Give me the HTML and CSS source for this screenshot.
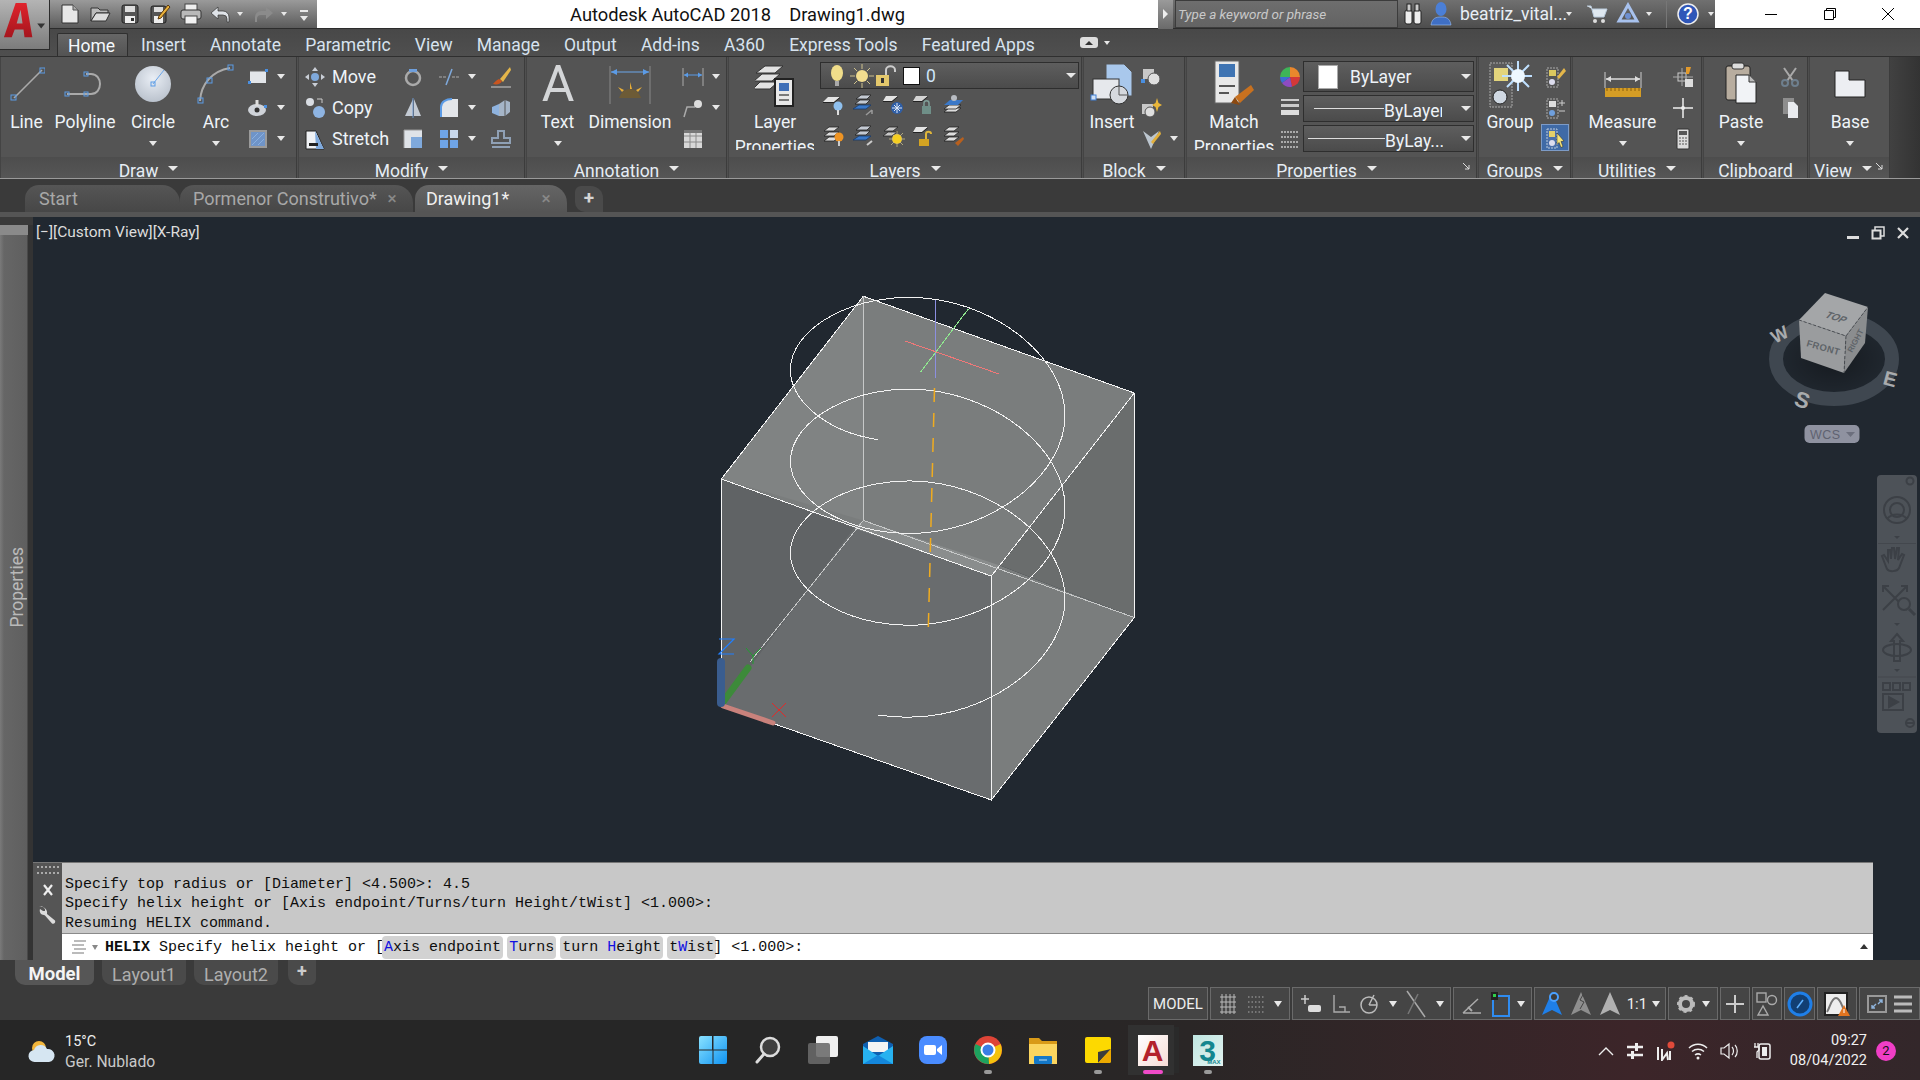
FILE: index.html
```html
<!DOCTYPE html>
<html lang="pt">
<head>
<meta charset="utf-8">
<title>Autodesk AutoCAD 2018 - Drawing1.dwg</title>
<link rel="stylesheet" href="styles.css">
</head>
<body>
<div class="app">

<header class="titlebar">
  <div class="qat">
    <svg class="q" width="22" height="22" viewBox="0 0 22 22"><path d="M3 2h11l5 5v13H3z" fill="#e8e8e8" stroke="#333"/><path d="M14 2v5h5" fill="#aaa" stroke="#555"/></svg>
    <svg class="q" width="22" height="22" viewBox="0 0 22 22"><path d="M2 5h7l2 2h8v3H7L2 18z" fill="#bbb" stroke="#333"/><path d="M7 10h14l-4 8H2z" fill="#ddd" stroke="#333"/></svg>
    <svg class="q" width="22" height="22" viewBox="0 0 22 22"><rect x="3" y="2" width="16" height="18" rx="2" fill="#555" stroke="#222"/><rect x="6" y="3" width="10" height="6" fill="#ddd"/><rect x="6" y="13" width="10" height="7" fill="#eee"/><rect x="12" y="15" width="3" height="3" fill="#333"/></svg>
    <svg class="q" width="22" height="22" viewBox="0 0 22 22"><rect x="2" y="3" width="15" height="17" rx="2" fill="#555" stroke="#222"/><rect x="5" y="4" width="9" height="5" fill="#ddd"/><rect x="5" y="13" width="9" height="7" fill="#eee"/><path d="M19 2L10 13l-1 3 3-1 9-11z" fill="#e8b03a" stroke="#5b3a10"/></svg>
    <svg class="q" width="24" height="22" viewBox="0 0 24 22"><rect x="6" y="1" width="12" height="7" fill="#eee" stroke="#444"/><rect x="2" y="7" width="20" height="9" rx="2" fill="#b9b9b9" stroke="#333"/><rect x="6" y="13" width="12" height="8" fill="#f2f2f2" stroke="#444"/></svg>
    <svg class="q q-undo" width="22" height="22" viewBox="0 0 22 22"><path d="M9 4L2 10l7 6v-4h5a4 4 0 0 1 4 4v3h2v-5a6 6 0 0 0-6-6H9z" fill="#dfe3e8" stroke="#333" stroke-width=".7"/></svg>
    <i class="ar ar-q"></i>
    <svg class="q q-redo" width="22" height="22" viewBox="0 0 22 22"><path d="M13 4l7 6-7 6v-4H8a4 4 0 0 0-4 4v3H2v-5a6 6 0 0 1 6-6h5z" fill="#8b8b8b"/></svg>
    <i class="ar ar-q ar-q2"></i>
    <span class="q-more"><i class="ar"></i></span>
  </div>
  <div class="apptitle">Autodesk AutoCAD 2018&nbsp;&nbsp;&nbsp;&nbsp;Drawing1.dwg</div>
  <div class="infocenter">
    <span class="ic-arrow"></span>
    <span class="search">Type a keyword or phrase</span>
    <svg class="bino" width="20" height="24" viewBox="0 0 20 24"><rect x="2" y="8" width="7" height="14" rx="2" fill="#eee" stroke="#222"/><rect x="11" y="8" width="7" height="14" rx="2" fill="#eee" stroke="#222"/><rect x="4" y="2" width="4" height="7" fill="#ccc" stroke="#222"/><rect x="12" y="2" width="4" height="7" fill="#ccc" stroke="#222"/></svg>
    <svg class="user" width="22" height="26" viewBox="0 0 22 26"><ellipse cx="11" cy="8" rx="5.5" ry="7" fill="#4b7fd6"/><path d="M1 24c1-7 5-8 10-8s9 1 10 8z" fill="#3f6fc4" stroke="#9cc0f5" stroke-width=".6"/></svg>
    <span class="uname">beatriz_vital...</span><i class="ar ar-sm"></i>
    <svg class="cart" width="22" height="22" viewBox="0 0 22 22"><path d="M1 3h4l3 11h10l3-8H6" fill="#dfe8f0" stroke="#bcd"/><circle cx="9" cy="18" r="2" fill="#ddd"/><circle cx="17" cy="18" r="2" fill="#ddd"/></svg>
    <svg class="tri" width="24" height="24" viewBox="0 0 24 24"><path d="M12 3L3 19h18z" fill="none" stroke="#a8c2ee" stroke-width="3"/><circle cx="12" cy="14" r="3" fill="#6d8fd0"/></svg><i class="ar ar-sm"></i>
    <span class="ic-sep"></span>
    <svg class="help" width="22" height="22" viewBox="0 0 22 22"><circle cx="11" cy="11" r="10" fill="#2f56b8" stroke="#eee" stroke-width="1.5"/><text x="11" y="16" text-anchor="middle" class="help-q">?</text></svg><i class="ar ar-sm"></i>
  </div>
  <div class="winbtns">
    <svg width="14" height="14" viewBox="0 0 14 14"><path d="M1 7.500h12" stroke="#000"/></svg>
    <svg width="14" height="14" viewBox="0 0 14 14"><path d="M3.500 3.500V1.500h9v9h-2M1.500 3.500h9v9h-9z" fill="none" stroke="#000"/></svg>
    <svg width="14" height="14" viewBox="0 0 14 14"><path d="M1 1l12 12M13 1L1 13" stroke="#000"/></svg>
  </div>
</header>

<svg class="applogo" width="50" height="50" viewBox="0 0 50 50">
  <defs><linearGradient id="red" x1="0" y1="0" x2="0" y2="1"><stop offset="0" stop-color="#e0242c"/><stop offset="1" stop-color="#a5161e"/></linearGradient></defs>
  <path d="M4 38L16 3h11l6 35h-8l-1-8H15l-3 8zM17 24h6l-2-14z" fill="url(#red)"/>
  <path d="M38 24h8l-4 5z" fill="#333"/>
</svg>

<nav class="ribbontabs">
  <span class="rt rt-on">Home</span><span class="rt">Insert</span><span class="rt">Annotate</span><span class="rt">Parametric</span><span class="rt">View</span><span class="rt">Manage</span><span class="rt">Output</span><span class="rt">Add-ins</span><span class="rt">A360</span><span class="rt">Express Tools</span><span class="rt">Featured Apps</span>
  <svg class="rt-min" width="18" height="12" viewBox="0 0 18 12"><rect width="18" height="11" rx="3" fill="#ddd"/><path d="M5 8l4-4 4 4z" fill="#333"/></svg><i class="ar ar-sm"></i>
</nav>

<section class="ribbon">

  <div class="panel p-draw">
    <div class="pbody">
      <div class="big b-line"><div class="bi"><svg width="36" height="36" viewBox="0 0 36 36"><path d="M5 32L33 4" stroke="#aaa" stroke-width="1.600"/><rect x="2" y="29" width="5" height="5" fill="none" stroke="#5b9be6"/><rect x="31" y="2" width="5" height="5" fill="none" stroke="#5b9be6"/></svg></div><span>Line</span></div>
      <div class="big b-poly"><div class="bi"><svg width="42" height="32" viewBox="0 0 42 32"><path d="M3 26h24c12 0 12-20 0-20h-5" fill="none" stroke="#aaa" stroke-width="2"/><g fill="none" stroke="#5b9be6"><rect x="1" y="24" width="4" height="4"/><rect x="20" y="24" width="4" height="4"/><rect x="20" y="4" width="4" height="4"/></g></svg></div><span>Polyline</span></div>
      <div class="big b-circle"><div class="bi"><svg width="40" height="40" viewBox="0 0 40 40"><defs><radialGradient id="disc" cx=".5" cy=".35" r=".7"><stop offset="0" stop-color="#e9eef5"/><stop offset="1" stop-color="#b7bfca"/></radialGradient></defs><circle cx="20" cy="20" r="18" fill="url(#disc)"/><path d="M20 20L31 6" stroke="#6aa6ea"/><rect x="18" y="18" width="4" height="4" fill="none" stroke="#5b9be6"/></svg></div><span>Circle</span><i class="ar ar-big"></i></div>
      <div class="big b-arc"><div class="bi"><svg width="40" height="40" viewBox="0 0 40 40"><path d="M4 37C5 20 16 7 34 4" fill="none" stroke="#aaa" stroke-width="2"/><g fill="none" stroke="#5b9be6"><rect x="2" y="34" width="5" height="5"/><rect x="11" y="14" width="5" height="5"/><rect x="32" y="1" width="5" height="5"/></g></svg></div><span>Arc</span><i class="ar ar-big"></i></div>
      <div class="smallcol">
        <div class="sm"><svg width="22" height="22" viewBox="0 0 22 22"><rect x="3" y="5" width="16" height="12" fill="#e3e6ea"/><path d="M3 5h16" stroke="#666"/><g fill="#4a8fe0"><rect x="1" y="15" width="3" height="3"/><rect x="18" y="3" width="3" height="3"/></g></svg><i class="ar"></i></div>
        <div class="sm"><svg width="22" height="22" viewBox="0 0 22 22"><ellipse cx="10" cy="13" rx="9" ry="6" fill="#cfd3d9"/><circle cx="10" cy="13" r="2.500" fill="#333"/><path d="M10 3v6" stroke="#ddd" stroke-width="3"/><rect x="17" y="8" width="3" height="3" fill="#4a8fe0"/></svg><i class="ar"></i></div>
        <div class="sm"><svg width="22" height="22" viewBox="0 0 22 22"><rect x="3" y="3" width="16" height="16" fill="#6f94c8" stroke="#9a9a9a" stroke-width="2"/><path d="M5 17L17 5M5 11l6-6M11 17l6-6" stroke="#8ab0e0"/></svg><i class="ar"></i></div>
      </div>
    </div>
    <div class="ptitle">Draw<i class="ar ar-t"></i></div>
  </div>

  <div class="panel p-modify">
    <div class="pbody">
      <div class="smallcol col-labels">
        <div class="sm"><svg width="22" height="22" viewBox="0 0 22 22"><path d="M11 1l3 4h-6zM11 21l3-4h-6zM1 11l4-3v6zM21 11l-4-3v6z" fill="#c9ced6"/><circle cx="11" cy="11" r="4" fill="#7fa9dc"/></svg><span>Move</span></div>
        <div class="sm"><svg width="22" height="22" viewBox="0 0 22 22"><circle cx="6" cy="5" r="4" fill="#d9dde3"/><circle cx="15" cy="15" r="6" fill="#8eb4e2"/><path d="M13 2h5v4" fill="none" stroke="#ccc"/></svg><span>Copy</span></div>
        <div class="sm"><svg width="22" height="22" viewBox="0 0 22 22"><path d="M2 3h10l8 18H2z" fill="#f0f2f5" stroke="#222"/><path d="M11 3l9 18h-8z" fill="#7fa9dc"/><path d="M5 15h9v3H5z" fill="#222"/></svg><span>Stretch</span></div>
      </div>
      <div class="smallcol">
        <div class="sm"><svg width="22" height="22" viewBox="0 0 22 22"><circle cx="11" cy="12" r="7" fill="none" stroke="#aaa" stroke-width="2.500"/><path d="M7 3h8v3H7z" fill="#6f9fdc"/></svg></div>
        <div class="sm"><svg width="22" height="22" viewBox="0 0 22 22"><path d="M11 2L3 19h8zM12 2l7 17h-7z" fill="#c3cad3"/><path d="M11 1v20" stroke="#6d96cc"/></svg></div>
        <div class="sm"><svg width="22" height="22" viewBox="0 0 22 22"><rect x="2" y="2" width="18" height="18" fill="#dfe3e8"/><rect x="9" y="9" width="11" height="11" fill="#7fa9dc"/><path d="M2 2h18M2 2v18" stroke="#999"/></svg></div>
      </div>
      <div class="smallcol">
        <div class="sm"><svg width="22" height="22" viewBox="0 0 22 22"><path d="M1 11h7M14 11h7" stroke="#aaa" stroke-dasharray="3 1"/><path d="M14 3L8 19" stroke="#7fa9dc" stroke-width="1.500"/></svg><i class="ar"></i></div>
        <div class="sm"><svg width="22" height="22" viewBox="0 0 22 22"><path d="M3 20V10C3 5 8 2 14 2h6v18z" fill="#e3e6ea"/><path d="M3 20V10C3 5 8 2 14 2" fill="none" stroke="#5b9be6" stroke-width="2"/></svg><i class="ar"></i></div>
        <div class="sm"><svg width="22" height="22" viewBox="0 0 22 22"><g fill="#6fa4e6"><rect x="2" y="2" width="8" height="8"/><rect x="2" y="12" width="8" height="8"/><rect x="12" y="12" width="8" height="8"/></g><rect x="12" y="2" width="8" height="8" fill="#c8d8ec"/></svg><i class="ar"></i></div>
      </div>
      <div class="smallcol">
        <div class="sm"><svg width="22" height="22" viewBox="0 0 22 22"><path d="M20 1L10 13l3 3L21 4z" fill="#e4b64a"/><path d="M9 13c-3 1-4 3-6 5 4 1 8 0 9-3z" fill="#c9551f"/><path d="M1 21h20" stroke="#ccc"/></svg></div>
        <div class="sm"><svg width="22" height="22" viewBox="0 0 22 22"><path d="M2 10l7-3v12l-7-3z" fill="#8fb3df"/><path d="M9 7l6-4 5 2v10l-5 4-6 0z" fill="#a5b5c8"/><path d="M15 3v16" stroke="#555"/></svg></div>
        <div class="sm"><svg width="22" height="22" viewBox="0 0 22 22"><path d="M8 10V3h6v7h6v5H2v-5zM2 19h18" fill="none" stroke="#8fa0b5" stroke-width="2"/></svg></div>
      </div>
    </div>
    <div class="ptitle">Modify<i class="ar ar-t"></i></div>
  </div>

  <div class="panel p-annot">
    <div class="pbody">
      <div class="big b-text"><div class="bi"><svg width="36" height="52" viewBox="0 0 36 52"><text x="18" y="43" text-anchor="middle" class="big-a">A</text></svg></div><span>Text</span><i class="ar ar-big"></i></div>
      <div class="big b-dim"><div class="bi"><svg width="46" height="44" viewBox="0 0 46 44"><path d="M3 4v38M43 4v38" stroke="#888"/><path d="M4 10h38" stroke="#6aa6ea"/><path d="M4 10l6-3v6zM42 10l-6-3v6z" fill="#5b9be6"/><path d="M12 36c4-12 18-12 22 0z" fill="#6d5b36"/><g fill="#e9ae37"><path d="M15 30l-4-5 6 3zM23 27v-7l2 7zM31 30l4-5-6 3z"/></g></svg></div><span>Dimension</span></div>
      <div class="smallcol">
        <div class="sm"><svg width="22" height="22" viewBox="0 0 22 22"><path d="M1 2v18M21 2v18" stroke="#aaa"/><path d="M2 9h18" stroke="#5b9be6"/><path d="M2 9l4-2.500v5zM20 9l-4-2.500v5z" fill="#5b9be6"/></svg><i class="ar"></i></div>
        <div class="sm"><svg width="22" height="22" viewBox="0 0 22 22"><path d="M2 20l3-10h8" fill="none" stroke="#aaa" stroke-width="1.500"/><circle cx="16" cy="7" r="4" fill="#ddd"/></svg><i class="ar"></i></div>
        <div class="sm"><svg width="22" height="22" viewBox="0 0 22 22"><rect x="2" y="2" width="18" height="18" fill="#d8d8d8"/><path d="M2 8h18M2 14h18M8 2v18M14 2v18" stroke="#8a8a8a"/><rect x="2" y="2" width="18" height="3" fill="#777"/></svg></div>
      </div>
    </div>
    <div class="ptitle">Annotation<i class="ar ar-t"></i></div>
  </div>

  <div class="panel p-layers">
    <div class="pbody">
      <div class="big b-layer"><div class="bi"><svg width="40" height="50" viewBox="0 0 40 50"><g fill="#e2e2e2" stroke="#333"><path d="M10 7h18l-8 7H1z"/><path d="M7 15h18l-8 7H-1z"/><path d="M5 23h18l-8 7H-2z"/></g><rect x="20" y="20" width="18" height="27" fill="#e9e9e9" stroke="#222" stroke-width="2"/><rect x="24" y="24" width="10" height="8" fill="#3f6fb8"/><path d="M24 36h10M24 41h10" stroke="#555" stroke-width="1.500"/></svg></div><span>Layer</span><span>Properties</span></div>
      <div class="layercol">
        <div class="dd dd-layer">
          <svg width="24" height="24" viewBox="0 0 24 24"><ellipse cx="12" cy="9" rx="6" ry="8" fill="#f0dd8a"/><rect x="10" y="17" width="4" height="5" fill="#aaa"/></svg>
          <svg width="26" height="26" viewBox="0 0 26 26"><circle cx="13" cy="13" r="6" fill="#f2dd8f"/><path d="M13 1v5M13 20v5M1 13h5M20 13h5M5 5l3 3M18 18l3 3M21 5l-3 3M8 18l-3 3" stroke="#cfc28d"/></svg>
          <svg width="24" height="24" viewBox="0 0 24 24"><rect x="1" y="11" width="13" height="11" fill="#e4c86c"/><rect x="6" y="14" width="3" height="5" fill="#333"/><path d="M11 11V6c0-5 9-5 9 0v2" fill="none" stroke="#ccc" stroke-width="2"/></svg>
          <span class="swatch"></span><span class="dd-text dd-zero">0</span><i class="ar ar-dd"></i>
        </div>
        <div class="lrow">
          <svg width="22" height="22" viewBox="0 0 22 22"><path d="M5 3h12l-6 5H0z" fill="#e4e4e4"/><path d="M0 8h11l6-5v1l-6 5H0z" fill="#222"/><circle cx="15" cy="12" r="4.500" fill="#8fc0ee"/><rect x="14" y="16" width="2" height="5" fill="#ddd"/></svg>
          <svg width="22" height="22" viewBox="0 0 22 22"><g fill="#c3c9d2" stroke="#222" stroke-width=".8"><path d="M8 1h10l-4 4H3z"/><path d="M7 6h10l-4 4H2z"/></g><path d="M6 11h12l-5 4H0z" fill="#3a78c8" stroke="#183a6a" stroke-width=".8"/><path d="M13 21l6-5M19 16v4" stroke="#9a9a9a" stroke-width="1.500" fill="none"/></svg>
          <svg width="22" height="22" viewBox="0 0 22 22"><path d="M3 2h12l-6 5H0z" fill="#e4e4e4"/><path d="M0 7h9l6-5v1l-6 5H0z" fill="#222"/><circle cx="14" cy="14" r="6" fill="#2f5fa8"/><path d="M14 9v10M9 14h10M11 11l6 6M17 11l-6 6" stroke="#dfe8f5"/></svg>
          <svg width="22" height="22" viewBox="0 0 22 22"><path d="M3 2h12l-6 5H0z" fill="#d4d4d4"/><path d="M0 7h9l6-5v1l-6 5H0z" fill="#222"/><rect x="9" y="12" width="9" height="8" fill="#6f8f88"/><path d="M11 12V9c0-3 5-3 5 0v3" fill="none" stroke="#7f9f98" stroke-width="1.500"/></svg>
          <svg width="22" height="22" viewBox="0 0 22 22"><g fill="#ddd" stroke="#222" stroke-width=".8"><path d="M6 14h12l-5 4H1z"/><path d="M6 11h12l-5 4H1z"/></g><path d="M7 6h13l-5 5H1z" fill="#3a78c8"/><circle cx="11" cy="4" r="3" fill="#b8bcc2"/></svg>
        </div>
        <div class="lrow">
          <svg width="22" height="22" viewBox="0 0 22 22"><g fill="#ddd" stroke="#222" stroke-width=".8"><path d="M6 2h10l-5 4H1z"/><path d="M6 7h10l-5 4H1z"/><path d="M6 12h10l-5 4H1z"/></g><circle cx="16" cy="12" r="4.500" fill="#ee9424"/><rect x="15" y="16" width="2" height="5" fill="#ccc"/></svg>
          <svg width="22" height="22" viewBox="0 0 22 22"><g fill="#c3c9d2" stroke="#222" stroke-width=".8"><path d="M8 1h10l-4 4H3z"/><path d="M7 6h10l-4 4H2z"/></g><path d="M6 11h12l-5 4H0z" fill="#3a78c8" stroke="#183a6a" stroke-width=".8"/><path d="M14 20l5-4" stroke="#ccc" stroke-width="2"/></svg>
          <svg width="22" height="22" viewBox="0 0 22 22"><g fill="#c8c8c8" stroke="#222" stroke-width=".8"><path d="M6 2h9l-5 4H1z"/><path d="M5 7h9l-5 4H0z"/></g><circle cx="14" cy="14" r="5" fill="#f0c93c"/><path d="M14 6v16M6 14h16M8 8l12 12M20 8L8 20" stroke="#c8bd8a" stroke-width=".8"/><circle cx="14" cy="14" r="4" fill="#f5cf20"/></svg>
          <svg width="22" height="22" viewBox="0 0 22 22"><path d="M3 2h12l-6 5H0z" fill="#e4e4e4"/><path d="M0 7h9l6-5v1l-6 5H0z" fill="#222"/><rect x="6" y="14" width="10" height="7" fill="#d3a322"/><path d="M13 14V9c0-3 5-3 5 0" fill="none" stroke="#e0b63a" stroke-width="2"/></svg>
          <svg width="22" height="22" viewBox="0 0 22 22"><g fill="#ddd" stroke="#222" stroke-width=".8"><path d="M6 2h10l-5 4H1z"/><path d="M6 7h10l-5 4H1z"/><path d="M6 12h10l-5 4H1z"/></g><path d="M20 12l-8 6 3 3 6-7z" fill="#b8601e"/></svg>
        </div>
      </div>
    </div>
    <div class="ptitle">Layers<i class="ar ar-t"></i></div>
  </div>

  <div class="panel p-block">
    <div class="pbody">
      <div class="big b-insert"><div class="bi"><svg width="44" height="44" viewBox="0 0 44 44"><path d="M16 2h18l8 8v24H16z" fill="#a9c8ec" stroke="#555"/><rect x="3" y="17" width="26" height="20" fill="#e6e8ec" stroke="#333"/><circle cx="29" cy="33" r="9" fill="#d6d9de" stroke="#333"/><path d="M29 24v9h9" fill="none" stroke="#555"/><rect x="1" y="33" width="5" height="5" fill="#cfe0f5" stroke="#3f7fd6"/></svg></div><span>Insert</span></div>
      <div class="smallcol">
        <div class="sm"><svg width="22" height="22" viewBox="0 0 22 22"><rect x="3" y="3" width="11" height="10" fill="#c8c8c8"/><circle cx="14" cy="13" r="6" fill="#dfdfdf" stroke="#555"/><rect x="1" y="13" width="4" height="4" fill="#4a8fe0"/></svg></div>
        <div class="sm"><svg width="22" height="22" viewBox="0 0 22 22"><rect x="2" y="7" width="11" height="10" fill="#c8c8c8"/><circle cx="10" cy="15" r="5" fill="#dfdfdf" stroke="#555"/><path d="M17 1l1.500 5L22 8l-3.500 2L17 15l-1.500-5L12 8l3.500-2z" fill="#e9b63a"/></svg></div>
        <div class="sm"><svg width="22" height="22" viewBox="0 0 22 22"><path d="M3 3l8 18 8-18-8 6z" fill="#bcc6cf"/><path d="M20 3l-9 11 2 2 8-10z" fill="#e2b03c"/></svg><i class="ar"></i></div>
      </div>
    </div>
    <div class="ptitle">Block<i class="ar ar-t"></i></div>
  </div>

  <div class="panel p-props">
    <div class="pbody">
      <div class="big b-match"><div class="bi"><svg width="46" height="50" viewBox="0 0 46 50"><rect x="4" y="2" width="24" height="42" fill="#e8e8e8" stroke="#666"/><rect x="8" y="5" width="16" height="13" fill="#3f74b3"/><path d="M8 27h16M8 34h10" stroke="#555" stroke-width="2"/><path d="M40 26L24 38l5 6 14-13z" fill="#c8711f"/><path d="M24 38l-4 6 9 2z" fill="#8b4a12"/></svg></div><span>Match</span><span>Properties</span></div>
      <div class="propicons">
        <svg width="22" height="22" viewBox="0 0 22 22"><path d="M11 11V1a10 10 0 0 1 10 10z" fill="#e9872c"/><path d="M11 11h10a10 10 0 0 1-8 9.800z" fill="#d43838"/><path d="M11 11l2 9.800A10 10 0 0 1 3 17z" fill="#8e4bc1"/><path d="M11 11L3 17A10 10 0 0 1 1 11z" fill="#3c6ed2"/><path d="M11 11H1A10 10 0 0 1 11 1z" fill="#3eb457"/></svg>
        <svg width="22" height="22" viewBox="0 0 22 22"><rect x="2" y="2" width="18" height="2" fill="#ccc"/><rect x="2" y="7" width="18" height="3" fill="#ccc"/><rect x="2" y="13" width="18" height="5" fill="#ddd"/></svg>
        <svg width="22" height="22" viewBox="0 0 22 22"><path d="M2 4h18M2 9h18M2 14h18M2 19h18" stroke="#aaa" stroke-width="2" stroke-dasharray="2 1"/></svg>
      </div>
      <div class="propdds">
        <div class="dd dd-c"><span class="swatch swatch-l"></span><span class="dd-text">ByLayer</span><i class="ar ar-dd"></i></div>
        <div class="dd dd-l"><span class="lnline"></span><span class="dd-text dd-clip">ByLayer</span><i class="ar ar-dd"></i></div>
        <div class="dd dd-l"><span class="lnline lnline-w"></span><span class="dd-text dd-clip">ByLay...</span><i class="ar ar-dd"></i></div>
      </div>
    </div>
    <div class="ptitle">Properties<i class="ar ar-t"></i><svg class="launcher" width="9" height="9" viewBox="0 0 9 9"><path d="M1 1l6 6M7 3v4H3" fill="none" stroke="#ddd"/></svg></div>
  </div>

  <div class="panel p-groups">
    <div class="pbody">
      <div class="big b-group"><div class="bi"><svg width="44" height="50" viewBox="0 0 44 50"><rect x="2" y="4" width="22" height="44" fill="#5b5b5b" stroke="#aaa" stroke-dasharray="2 1"/><rect x="6" y="9" width="14" height="13" fill="#e3d47c"/><circle cx="12" cy="38" r="7" fill="#cfd8e2" stroke="#222"/><g stroke="#bfe0ff" stroke-width="2"><path d="M30 2v30M14 17h30M19 6l22 22M41 6L19 28"/></g><circle cx="30" cy="17" r="7" fill="#eef8ff"/></svg></div><span>Group</span></div>
      <div class="smallcol col-group">
        <div class="sm"><svg width="22" height="22" viewBox="0 0 22 22"><rect x="3" y="2" width="11" height="19" fill="#555" stroke="#aaa" stroke-dasharray="2 1"/><rect x="5" y="4" width="7" height="6" fill="#dcc85f"/><circle cx="8" cy="16" r="3" fill="#dde"/><path d="M20 2l-7 9 2 2 7-8z" fill="#e4b64a"/></svg></div>
        <div class="sm"><svg width="22" height="22" viewBox="0 0 22 22"><rect x="3" y="2" width="11" height="19" fill="#555" stroke="#aaa" stroke-dasharray="2 1"/><rect x="5" y="4" width="7" height="6" fill="#ddd"/><circle cx="8" cy="16" r="3" fill="#6f9fdc"/><path d="M18 3v6M15 6h6M15 14h6" stroke="#ccc"/></svg></div>
        <div class="sm sm-active"><svg width="22" height="22" viewBox="0 0 22 22"><rect x="3" y="2" width="10" height="19" fill="#4a6fa8" stroke="#bcd" stroke-dasharray="2 1"/><rect x="5" y="4" width="6" height="6" fill="#e2cf6a"/><circle cx="8" cy="16" r="3" fill="#dde"/><path d="M13 6l7 8-3 .500 2 5-2 1-2-5-2 2z" fill="#f4e27a" stroke="#222" stroke-width=".5"/></svg></div>
      </div>
    </div>
    <div class="ptitle">Groups<i class="ar ar-t"></i></div>
  </div>

  <div class="panel p-util">
    <div class="pbody">
      <div class="big b-measure"><div class="bi"><svg width="40" height="36" viewBox="0 0 40 36"><path d="M2 6v16M38 6v16" stroke="#ccc"/><path d="M3 13h34" stroke="#ddd" stroke-width="1.500"/><path d="M3 13l5-3v6zM37 13l-5-3v6z" fill="#ddd"/><rect x="2" y="22" width="36" height="9" fill="#d59d25"/><path d="M4 22v3M8 22v3M12 22v3M16 22v3M20 22v3M24 22v3M28 22v3M32 22v3M36 22v3" stroke="#8a5e0c"/></svg></div><span>Measure</span><i class="ar ar-big"></i></div>
      <div class="smallcol">
        <div class="sm"><svg width="22" height="22" viewBox="0 0 22 22"><rect x="6" y="7" width="8" height="8" fill="none" stroke="#ccc"/><path d="M1 11h20M10 2v18" stroke="#aaa"/><path d="M14 1h5l-2 7h-3z" fill="#e29a2c"/><rect x="13" y="13" width="8" height="8" fill="#ddd"/></svg></div>
        <div class="sm"><svg width="22" height="22" viewBox="0 0 22 22"><path d="M11 1v20M1 11h20" stroke="#c8c8c8" stroke-width="2"/><circle cx="11" cy="11" r="2" fill="#eee"/></svg></div>
        <div class="sm"><svg width="22" height="22" viewBox="0 0 22 22"><rect x="5" y="1" width="12" height="20" rx="1" fill="#dcdcdc" stroke="#333"/><rect x="7" y="3" width="8" height="4" fill="#555"/><path d="M7 10h8M7 13h8M7 16h8" stroke="#555" stroke-dasharray="2 1"/></svg></div>
      </div>
    </div>
    <div class="ptitle">Utilities<i class="ar ar-t"></i></div>
  </div>

  <div class="panel p-clip">
    <div class="pbody">
      <div class="big b-paste"><div class="bi"><svg width="34" height="46" viewBox="0 0 34 46"><rect x="2" y="5" width="24" height="34" rx="2" fill="#b8ad9f" stroke="#222"/><rect x="8" y="2" width="12" height="6" rx="2" fill="#ddd" stroke="#333"/><path d="M12 14h13l7 7v21H12z" fill="#f1f3f6" stroke="#222"/><path d="M25 14v7h7" fill="#bbb" stroke="#333"/></svg></div><span>Paste</span><i class="ar ar-big"></i></div>
      <div class="smallcol">
        <div class="sm"><svg width="22" height="22" viewBox="0 0 22 22"><path d="M5 2l9 13M17 2L8 15" stroke="#a9a9a9" stroke-width="2"/><circle cx="6" cy="17" r="3" fill="none" stroke="#6e7f8e" stroke-width="2"/><circle cx="16" cy="17" r="3" fill="none" stroke="#6e7f8e" stroke-width="2"/></svg></div>
        <div class="sm"><svg width="22" height="22" viewBox="0 0 22 22"><rect x="4" y="1" width="11" height="16" fill="#8e8e8e"/><path d="M9 5h6l4 4v12H9z" fill="#e9ebef"/></svg></div>
      </div>
    </div>
    <div class="ptitle">Clipboard</div>
  </div>

  <div class="panel p-view">
    <div class="pbody">
      <div class="big b-base"><div class="bi"><svg width="34" height="30" viewBox="0 0 34 30"><path d="M2 2h14v9h16v17H2z" fill="#eceef2" stroke="#222"/></svg></div><span>Base</span><i class="ar ar-big"></i></div>
    </div>
    <div class="ptitle">View<i class="ar ar-t"></i><svg class="launcher" width="9" height="9" viewBox="0 0 9 9"><path d="M1 1l6 6M7 3v4H3" fill="none" stroke="#ddd"/></svg></div>
  </div>
</section>

<div class="doctabs">
  <span class="dt dt-start">Start</span>
  <span class="dt dt-porm">Pormenor Construtivo*<b class="x">✕</b></span>
  <span class="dt dt-on">Drawing1*<b class="x">✕</b></span>
  <span class="dt-plus">+</span>
</div>
<div class="docstrip"></div>

<main class="workspace">
  <aside class="palette"><span class="palette-grip"></span><span class="palette-label">Properties</span></aside>
  <div class="viewport">
    <svg class="drawing" width="1887" height="743" viewBox="33 217 1887 743">
      <g stroke="none">
        <polygon points="863.300,296.200 1134.300,393 1000,565.600 991.300,576.100 721.300,479" fill="#7a7d7d"/>
        <polygon points="863.300,296.200 863.300,520.400 721.300,479" fill="#808383"/>
        <polygon points="721.300,479 991.300,576.100 991.300,800 721.300,705.300" fill="#696c6e"/>
        <polygon points="1000,565.600 1134.300,393 1134.300,617.500" fill="#6a6d6d"/>
        <polygon points="991.300,576.100 1000,565.600 1134.300,617.500 991.300,800" fill="#7a7d7d"/>
        <polygon points="854,528 863.300,520.400 1000,565.600 991.300,576.100" fill="#8a8d8d"/>
        <polygon points="721.300,479 854,528 721.300,705.300" fill="#606365"/>
      </g>
      <g class="crisp" fill="none" stroke="#f4f4f4">
        <path d="M863.300 296.200L1134.300 393 1134.300 617.500 991.300 800 721.300 705.300 721.300 479zM721.300 479L991.300 576.100 1134.300 393M991.300 576.100V800"/>
      </g>
      <path class="crisp" d="M863.300 296.200V520.400M863.300 520.400L1134.300 617.500M863.300 520.400L750 662" fill="none" stroke="#c6c8c8"/>
      <path class="helix crisp" d="M877.700 439.600C826.700 431.800 790.400 401.200 790.400 369.500C790.400 327.900 855.800 290.700 927.700 298.350C999.600 306 1065 358.500 1065 415.400C1065 472.300 999.600 524.800 927.700 532.450C855.800 540.100 790.400 502.900 790.400 461.300C790.400 419.700 855.800 382.500 927.700 390.150C999.600 397.800 1065 450.300 1065 507.200C1065 564.100 999.600 616.600 927.700 624.250C855.800 631.900 790.400 594.700 790.400 553.100C790.400 511.500 855.800 474.300 927.700 481.950C999.600 489.600 1065 542.100 1065 599C1065 655.900 999.600 708.400 927.700 716.050C910.600 717.850 893.600 717.400 877.700 715"/>
      <path class="crisp" d="M935.500 300V378" stroke="#8c8fe0"/>
      <path class="crisp" d="M920.700 372L968.300 309" stroke="#8fe88f"/>
      <path class="crisp" d="M905 341L999 374" stroke="#f07878"/>
      <path d="M934.500 388L928.300 628" stroke="#f0ac20" stroke-width="1.500" stroke-dasharray="14 11" fill="none"/>
      <path d="M719 639h15l-15 15h15" fill="none" stroke="#1f7fff" stroke-width="1.200"/>
      <path d="M746 648l7 8 8-8M753 656v8" fill="none" stroke="#1f9f30"/>
      <path d="M772 703l14 14M786 703l-14 14" stroke="#e02a2a"/>
      <path d="M723 702L748 668" stroke="#3d8a3a" stroke-width="7" stroke-linecap="round"/>
      <path d="M723 706L773 723" stroke="#c9827c" stroke-width="5" stroke-linecap="round"/>
      <path d="M721 662V703" stroke="#3a5d8f" stroke-width="8" stroke-linecap="round"/>
    </svg>

    <div class="vp-label">[−][Custom View][X-Ray]</div>
    <div class="vp-controls">
      <svg width="14" height="14" viewBox="0 0 14 14"><rect x="1" y="10" width="12" height="3" fill="#ddd"/></svg>
      <svg width="14" height="14" viewBox="0 0 14 14"><path d="M4 4V1h9v9h-3" fill="none" stroke="#ddd" stroke-width="1.500"/><rect x="1.500" y="4.500" width="8" height="8" fill="none" stroke="#ddd" stroke-width="2"/></svg>
      <svg width="14" height="14" viewBox="0 0 14 14"><path d="M2 2l10 10M12 2L2 12" stroke="#ddd" stroke-width="2.200"/></svg>
    </div>

    <svg class="viewcube" width="200" height="200" viewBox="0 0 200 200">
      <defs><radialGradient id="shade"><stop offset="0" stop-color="#000" stop-opacity=".35"/><stop offset="1" stop-color="#000" stop-opacity="0"/></radialGradient></defs>
      <ellipse cx="114" cy="99" rx="58" ry="40" fill="url(#shade)"/>
      <ellipse cx="114" cy="99" rx="58" ry="40" fill="none" stroke="#3f4750" stroke-width="14"/>
      <polygon points="105,33 148,47 126,76 79,60" fill="#a4a6a8"/>
      <polygon points="79,60 126,76 124,113 81,98" fill="#9a9c9e"/>
      <polygon points="126,76 148,47 145,83 124,113" fill="#8b8d8f"/>
      <path d="M79 60L126 76 148 47M126 76L124 113" fill="none" stroke="#3b3f44" stroke-dasharray="3 2" stroke-width=".8"/>
      <text class="vc-top" transform="translate(104 57) rotate(18) skewX(-25)">TOP</text>
      <text class="vc-front" transform="translate(86 86) rotate(16)">FRONT</text>
      <text class="vc-right" transform="translate(132 93) rotate(-62)">RIGHT</text>
      <text class="vc-dir" transform="translate(55 84) rotate(-28)">W</text>
      <text class="vc-dir vc-s" transform="translate(73 145) rotate(18)">S</text>
      <text class="vc-dir vc-e" transform="translate(162 124) rotate(15)">E</text>
      <rect x="84.500" y="165" width="55" height="18" rx="5" fill="#8f92a0"/>
      <text class="vc-wcs" x="90" y="179">WCS</text>
      <path d="M126 172h9l-4.500 5z" fill="#6c6f7d"/>
    </svg>

    <div class="navbar">
      <svg width="40" height="258" viewBox="0 0 40 258" fill="none" stroke="#3c4046" stroke-width="2">
        <circle cx="33" cy="6" r="3.500"/>
        <circle cx="20" cy="35" r="13"/><circle cx="20" cy="35" r="7"/><path d="M10 44c5-6 15-6 20 0"/>
        <path d="M17 61h6l-3 3z" fill="#3c4046" stroke="none"/><path d="M1 68.500h38" stroke-width=".6"/>
        <path d="M8 89l-3-8 2-1 4 6V75h2l1 9 1-11h2l1 11 2-11h2l-1 12 4-6 2 1-5 13c-2 4-10 4-12 1z"/>
        <path d="M6 111l24 24M30 111L6 135M6 117v-6h6M30 117v-6h-6"/><circle cx="27" cy="129" r="6" fill="#4d5258"/><path d="M32 134l6 6" stroke-width="3"/>
        <path d="M17 148h6l-3 3z" fill="#3c4046" stroke="none"/>
        <path d="M20 159l6 7h-3v20h-6v-20h-3z"/><ellipse cx="20" cy="175" rx="14" ry="6"/>
        <path d="M17 194h6l-3 3z" fill="#3c4046" stroke="none"/><path d="M1 202h38" stroke-width=".6"/>
        <rect x="6" y="208" width="7" height="7"/><rect x="16" y="208" width="7" height="7"/><rect x="26" y="208" width="7" height="7"/>
        <rect x="6" y="219" width="20" height="16"/><path d="M12 222l9 5-9 5z" fill="#3c4046"/>
        <circle cx="33" cy="248" r="4"/><path d="M30 248h6" />
      </svg>
    </div>

    <section class="cmd">
      <div class="cmd-side">
        <span class="cmd-grip"></span>
        <svg width="14" height="14" viewBox="0 0 14 14"><path d="M3 2l8 10M11 2L3 12" stroke="#eee" stroke-width="2.200"/></svg>
        <svg class="wrench" width="18" height="20" viewBox="0 0 18 20"><path d="M3 1l3 3v2H4L1 4c-1 3 1 6 4 6l1 .500 7 8c2 1 4-1 3-3l-8-6.500c1-4-3-8-8-8z" fill="#dcdcdc"/></svg>
      </div>
      <div class="cmd-main">
        <div class="cmd-hist">
          <div>Specify top radius or [Diameter] &lt;4.500&gt;: 4.5</div>
          <div>Specify helix height or [Axis endpoint/Turns/turn Height/tWist] &lt;1.000&gt;:</div>
          <div>Resuming HELIX command.</div>
        </div>
        <div class="cmd-input">
          <svg class="cmd-ic" width="20" height="18" viewBox="0 0 20 18"><path d="M4 3h12M2 7h12M4 11h12M2 15h12" stroke="#bbb" stroke-width="2"/></svg><i class="ar ar-cmd"></i>
          <span class="cmd-line"><b>HELIX</b> Specify helix height or [<span class="chip"><u>A</u>xis endpoint</span> <span class="chip"><u>T</u>urns</span> <span class="chip">turn <u>H</u>eight</span> <span class="chip">t<u>W</u>ist</span>] &lt;1.000&gt;:</span>
          <i class="ar-up"></i>
        </div>
      </div>
    </section>
  </div>
</main>

<div class="bottombar">
  <div class="layouttabs">
    <span class="lt lt-on">Model</span><span class="lt">Layout1</span><span class="lt">Layout2</span><span class="lt-plus">+</span>
  </div>
  <div class="status">
    <div class="seg s-model">MODEL</div>
    <div class="seg s-grid">
      <svg width="20" height="26" viewBox="0 0 20 26"><path d="M3 3v20M7 3v20M11 3v20M15 3v20M1 6h16M1 11h16M1 16h16M1 21h16" stroke="#bbb"/></svg>
      <svg width="20" height="26" viewBox="0 0 20 26"><path d="M2 6h16M2 11h16M2 16h16M2 21h16" stroke="#aaa" stroke-dasharray="1.500 2"/></svg>
      <i class="ar ar-st"></i>
    </div>
    <div class="seg s-a">
      <svg width="24" height="24" viewBox="0 0 24 24"><path d="M6 3v9M2 7h8" stroke="#ccc" stroke-width="1.500"/><rect x="9" y="13" width="13" height="7" rx="2" fill="#ddd"/></svg>
      <svg width="22" height="24" viewBox="0 0 22 24"><path d="M4 3v17h16M9 15h6v5" fill="none" stroke="#aaa" stroke-width="1.400"/></svg>
      <svg width="24" height="24" viewBox="0 0 24 24"><circle cx="11" cy="13" r="8" fill="none" stroke="#bbb" stroke-width="1.500"/><path d="M11 13h8M11 13l5-10" stroke="#bbb" stroke-width="1.500"/></svg><i class="ar ar-st"></i>
      <svg width="26" height="28" viewBox="0 0 26 28"><path d="M4 1l18 26" stroke="#aaa" stroke-width="1.500"/><path d="M15 4L5 24" stroke="#777" stroke-width="1.500"/></svg><i class="ar ar-st"></i>
    </div>
    <div class="seg s-b">
      <svg width="24" height="24" viewBox="0 0 24 24"><path d="M3 21h18M3 21L18 7" stroke="#aaa" stroke-width="1.500"/><path d="M8 15l4 4" stroke="#aaa" stroke-width="2"/></svg>
      <svg width="22" height="26" viewBox="0 0 22 26"><rect x="3" y="5" width="16" height="20" fill="none" stroke="#2f8cf0" stroke-width="2"/><rect x="1" y="1" width="7" height="8" fill="#222"/><rect x="3" y="3" width="3" height="3" fill="#2fd04a"/></svg><i class="ar ar-st"></i>
    </div>
    <div class="seg s-c">
      <svg width="24" height="28" viewBox="0 0 24 28"><path d="M12 2L2 25l10-5 10 5z" fill="#1f7fe8"/><circle cx="14" cy="7" r="4" fill="#3b3b3b" stroke="#4aa0ff" stroke-width="2"/></svg>
      <svg width="24" height="28" viewBox="0 0 24 28"><path d="M12 2L2 25l10-5 10 5z" fill="#8e8e8e"/><path d="M15 3l-4 7 4 2-4 7" stroke="#444" fill="none"/></svg>
      <svg width="24" height="28" viewBox="0 0 24 28"><path d="M12 2L2 25l10-5 10 5z" fill="#b0b0b0"/></svg>
      <span class="scale">1:1</span><i class="ar ar-st ar-tight"></i>
    </div>
    <div class="seg s-d"><svg width="20" height="20" viewBox="0 0 20 20"><circle cx="10" cy="10" r="6" fill="none" stroke="#bbb" stroke-width="4"/><circle cx="10" cy="10" r="8" fill="none" stroke="#bbb" stroke-width="2" stroke-dasharray="3 3"/></svg><i class="ar ar-st"></i></div>
    <div class="seg s-e"><svg width="20" height="20" viewBox="0 0 20 20"><path d="M10 1v18M1 10h18" stroke="#ccc" stroke-width="2"/></svg></div>
    <div class="seg s-e"><svg width="22" height="26" viewBox="0 0 22 26"><rect x="1" y="2" width="9" height="9" fill="none" stroke="#aaa" stroke-width="1.400"/><circle cx="16" cy="9" r="4.500" fill="none" stroke="#aaa" stroke-width="1.400"/><path d="M7 15l-5 9h10z" fill="none" stroke="#aaa" stroke-width="1.400"/></svg></div>
    <div class="seg s-f"><svg width="26" height="26" viewBox="0 0 26 26"><circle cx="13" cy="13" r="11" fill="#123f73" stroke="#1f7fe8" stroke-width="3"/><path d="M10 17l6-8" stroke="#5db0ff" stroke-width="1.500"/></svg></div>
    <div class="seg s-g"><svg width="30" height="28" viewBox="0 0 30 28"><rect x="3" y="3" width="22" height="22" fill="#eee" stroke="#222" stroke-width="2"/><path d="M5 22c3-4 4-14 9-14s6 10 9 14" fill="none" stroke="#777" stroke-width="2"/><path d="M22 15l6 11H16z" fill="#e07420"/><path d="M22 19v4" stroke="#fff"/></svg></div>
    <div class="seg s-h"><svg width="22" height="20" viewBox="0 0 22 20"><rect x="2" y="2" width="18" height="16" fill="none" stroke="#999" stroke-width="2"/><path d="M6 14l4-4M16 6l-4 4M6 11v3h3M13 6h3v3" fill="none" stroke="#8fb4dc" stroke-width="1.400"/></svg><svg width="20" height="20" viewBox="0 0 20 20"><path d="M1 3h18M1 10h18M1 17h18" stroke="#bbb" stroke-width="3"/></svg></div>
  </div>
</div>

<footer class="taskbar">
  <div class="weather">
    <svg width="28" height="26" viewBox="0 0 28 26"><circle cx="11" cy="9" r="7" fill="#f2b63c"/><path d="M7 23a6 6 0 0 1-1-12 7 7 0 0 1 13-1 6.500 6.500 0 0 1 2 13z" fill="#d6e6f2"/></svg>
    <div class="w-text"><span>15°C</span><span class="w-sub">Ger. Nublado</span></div>
  </div>
  <div class="tb-apps">
    <span class="tb"><svg width="30" height="30" viewBox="0 0 30 30"><defs><linearGradient id="win" x1="0" y1="0" x2="1" y2="1"><stop offset="0" stop-color="#8ae2ff"/><stop offset="1" stop-color="#0f93f2"/></linearGradient></defs><g fill="url(#win)"><path d="M1 3a2 2 0 0 1 2-2h11v13.500H1zM15.500 1H27a2 2 0 0 1 2 2v11.500H15.500zM1 15.500h13.500V29H3a2 2 0 0 1-2-2zM15.500 15.500H29V27a2 2 0 0 1-2 2H15.500z"/></g></svg></span>
    <span class="tb"><svg width="28" height="28" viewBox="0 0 28 28"><circle cx="16" cy="11" r="9" fill="#3e3e3e" stroke="#dcdcdc" stroke-width="2.500"/><path d="M10 18L3 26" stroke="#dcdcdc" stroke-width="3" stroke-linecap="round"/></svg></span>
    <span class="tb"><svg width="32" height="32" viewBox="0 0 32 32"><rect x="9" y="2" width="22" height="21" rx="2" fill="#efefef"/><rect x="1" y="9" width="22" height="21" rx="2" fill="#6a6a6a" opacity=".88"/></svg></span>
    <span class="tb"><svg width="32" height="30" viewBox="0 0 32 30"><path d="M1 9L16 1l15 8v20H1z" fill="#0f5fb0"/><path d="M6 7h20v10H6z" fill="#f4f4f4"/><path d="M1 11l15 10 15-10v18H1z" fill="#27b2f0"/><path d="M1 29l15-9 15 9z" fill="#1487dc"/></svg></span>
    <span class="tb"><svg width="30" height="30" viewBox="0 0 30 30"><rect x="1" y="1" width="28" height="28" rx="8" fill="#4a8cff"/><rect x="6" y="10" width="12" height="10" rx="2" fill="#fff"/><path d="M19 14l5-4v10l-5-4z" fill="#fff"/></svg></span>
    <span class="tb tb-dot"><svg width="30" height="30" viewBox="0 0 30 30"><circle cx="15" cy="15" r="14" fill="#de4437"/><path d="M15 15L27.500 9A14 14 0 0 1 16 29z" fill="#f4c20d"/><path d="M15 15L16 29A14 14 0 0 1 2.500 9z" fill="#1da25f"/><circle cx="15" cy="15" r="6.500" fill="#3b7ee6" stroke="#fff" stroke-width="2"/></svg></span>
    <span class="tb"><svg width="30" height="28" viewBox="0 0 30 28"><path d="M1 2h10l3 3h15v23H1z" fill="#d99a18"/><path d="M1 8h28v20H1z" fill="#fbd55f"/><rect x="6" y="20" width="18" height="8" rx="1" fill="#1478c8"/><path d="M11 24h8" stroke="#bfe0f5"/></svg></span>
    <span class="tb tb-dot"><svg width="28" height="28" viewBox="0 0 28 28"><rect x="1" y="1" width="26" height="26" rx="2" fill="#fdd900"/><path d="M14 27V16l13-3z" fill="#3c3c3c"/><path d="M14 27h11a2 2 0 0 0 2-2V13z" fill="#eca900"/></svg></span>
    <span class="tb tb-acad"><span class="tile tile-a">A</span></span>
    <span class="tb tb-dot"><span class="tile tile-3">3<small class="tile-max">MAX</small></span></span>
  </div>
  <div class="tray">
    <svg width="16" height="10" viewBox="0 0 16 10"><path d="M1 9l7-7 7 7" fill="none" stroke="#eee" stroke-width="1.400"/></svg>
    <svg width="18" height="18" viewBox="0 0 18 18"><path d="M1 5h16M1 13h16" stroke="#eee" stroke-width="2.500"/><rect x="9" y="1" width="3" height="8" fill="#eee"/><rect x="5" y="9" width="3" height="8" fill="#eee"/></svg>
    <svg width="20" height="20" viewBox="0 0 20 20"><path d="M2 6v13M6 8v11l5-7 1 7M14 10v9" fill="none" stroke="#eee" stroke-width="2"/><circle cx="15" cy="4" r="3.500" fill="#e04a3a"/></svg>
    <svg width="20" height="18" viewBox="0 0 20 18"><path d="M1 6c5-5 13-5 18 0M4 9.500c3.500-3 8.500-3 12 0M7 13c2-1.500 4-1.500 6 0" fill="none" stroke="#eee" stroke-width="1.500"/><circle cx="10" cy="16" r="1.500" fill="#eee"/></svg>
    <svg width="20" height="18" viewBox="0 0 20 18"><path d="M1 6h3l5-4v14l-5-4H1z" fill="none" stroke="#eee" stroke-width="1.200"/><path d="M12 5c2 2 2 6 0 8M15 3c3 3 3 9 0 12" fill="none" stroke="#eee" stroke-width="1.200"/></svg>
    <svg width="20" height="20" viewBox="0 0 20 20"><rect x="7" y="3" width="11" height="15" rx="2" fill="none" stroke="#eee" stroke-width="1.500"/><rect x="10" y="6" width="5" height="9" fill="#eee"/><path d="M3 2v4M6 2v4M2 6h5v3l-2 2v6" fill="none" stroke="#eee" stroke-width="1.300"/></svg>
    <div class="clock"><span>09:27</span><span>08/04/2022</span></div>
    <span class="badge">2</span>
  </div>
</footer>
</div>
</body>
</html>
```

FILE: styles.css
```css
* { box-sizing: border-box; }
html, body { margin: 0; padding: 0; width: 1920px; height: 1080px; overflow: hidden; background: #3a3a3a; }
body { font-family: Roboto, "Open Sans", "Liberation Sans", sans-serif; color: #eee; }
.app { position: relative; width: 1920px; height: 1080px; display: flex; flex-direction: column; }
svg { display: block; flex: none; }
i { display: block; font-style: normal; }

.ar { width: 0; height: 0; flex: none; border-left: 4.5px solid transparent; border-right: 4.500px solid transparent; border-top: 5px solid #e8e8e8; }
.ar-sm { border-left-width: 3px; border-right-width: 3px; border-top-width: 4px; }

/* title bar */
.titlebar { height: 29px; flex: none; display: flex; background: #fff; border-bottom: 1px solid #2c2c2c; }
.qat { width: 317px; padding-left: 59px; display: flex; align-items: center; background: linear-gradient(#9a9a9a, #5b5b5b); }
.q { margin-right: 8px; }
.q-undo { margin-left: -2px; margin-right: 6px; }
.q-redo { margin-left: 10px; margin-right: 6px; }
.ar-q { border-left-width: 3px; border-right-width: 3px; border-top-width: 4px; }
.q-more { margin-left: 13px; padding-top: 4px; border-top: 2px solid #e8e8e8; margin-top: 2px; }
.apptitle { flex: none; width: 841px; text-align: center; padding-left: 0; color: #111; font-size: 18.300px; line-height: 29px; white-space: nowrap; }
.infocenter { width: 557px; flex: none; display: flex; align-items: center; background: linear-gradient(#707070, #4d4d4d); }
.ic-arrow { width: 15px; height: 29px; flex: none; margin-right: 2px; position: relative; background: linear-gradient(#9a9a9a, #6a6a6a); }
.ic-arrow::after { content: ""; position: absolute; left: 5px; top: 9px; border-left: 5px solid #eee; border-top: 5px solid transparent; border-bottom: 5px solid transparent; }
.search { width: 223px; height: 28px; flex: none; border: 1px solid #3c3c3c; background: linear-gradient(#6e6e6e, #636363); font-style: italic; font-size: 13.500px; line-height: 26px; padding-left: 2px; color: #c9c9c9; }
.bino { margin-left: 5px; }
.user { margin-left: 7px; }
.uname { margin-left: 8px; font-size: 17.500px; color: #e8eef5; width: 106px; white-space: nowrap; }
.cart { margin-left: 14px; }
.tri { margin-left: 8px; }
.tri + .ar { margin-left: 6px; }
.ic-sep { width: 1px; height: 27px; background: #777; margin-left: 14px; }
.help { margin-left: 10px; }
.help + .ar { margin-left: 9px; }
.help-q { font: bold 16px "Liberation Sans", sans-serif; fill: #fff; }
.winbtns { flex: 1; display: flex; justify-content: space-between; align-items: center; padding: 0 25px 0 49px; background: #fff; }
.applogo { position: absolute; left: 0; top: 0; background: linear-gradient(#b4b4b4, #7c7c7c); border-right: 1px solid #2b2b2b; border-bottom: 1px solid #2b2b2b; }

/* ribbon tabs */
.ribbontabs { height: 28px; flex: none; display: flex; align-items: flex-end; padding-left: 57px; background: linear-gradient(#484848, #4f4f4f); border-bottom: 1px solid #2f2f2f; }
.rt { font-size: 17.500px; line-height: 25px; height: 23px; padding: 0 12.100px; color: #d7e3ef; white-space: nowrap; }
.rt-on { color: #f5f9fd; background: linear-gradient(#666, #535353); border: 1px solid #2f2f2f; border-bottom: 0; border-radius: 2px 2px 0 0; width: 71px; padding: 0 10px; margin-right: 1px; }
.rt-min { margin-left: 33px; align-self: center; }
.ribbontabs > .ar { align-self: center; margin-left: 6px; }

/* ribbon */
.ribbon { height: 121px; flex: none; display: flex; background: linear-gradient(90deg, #505050, #4e4e4e 97%, #333); }
.panel { flex: none; display: flex; flex-direction: column; margin-right: 1px; background: #545454; border-left: 1px solid #444; border-right: 1px solid #3c3c3c; }
.pbody { height: 100px; flex: none; display: flex; }
.ptitle { position: relative; height: 21px; flex: none; display: flex; justify-content: center; gap: 10px; background: linear-gradient(#4d4d4d, #565656); font-size: 17.500px; line-height: 29px; color: #e6edf4; overflow: hidden; white-space: nowrap; }
.ar-t { margin-top: 9px; border-left-width: 5px; border-right-width: 5px; }
.launcher { position: absolute; right: 5px; top: 5px; }
.p-props .ptitle { padding-right: 10px; }
.p-view .ptitle { padding-right: 13px; }

.p-draw { width: 297px; }
.p-modify { width: 227px; }
.p-annot { width: 201px; }
.p-layers { width: 354px; }
.p-block { width: 102px; }
.p-props { width: 291px; }
.p-groups { width: 93px; }
.p-util { width: 130px; }
.p-clip { width: 105px; }
.p-view { width: 81px; }

.big { flex: none; height: 93px; display: flex; flex-direction: column; align-items: center; overflow: hidden; font-size: 17.500px; line-height: 25px; color: #eef3f8; white-space: nowrap; }
.bi { height: 53px; flex: none; display: flex; align-items: center; justify-content: center; }
.ar-big { margin-top: 6px; border-left-width: 4px; border-right-width: 4px; }
.big-a { font-size: 50px; fill: #d4d6d8; }
.smallcol { flex: none; padding-top: 4px; display: flex; flex-direction: column; }
.sm { height: 31px; display: flex; align-items: center; gap: 8px; font-size: 18px; color: #eef3f8; }
.col-labels { width: 98px; }
.col-labels .sm { gap: 6px; }

.b-line { width: 45px; margin-left: 3px; }
.b-poly { width: 72px; }
.b-circle { width: 64px; }
.b-arc { width: 62px; }

.p-modify .pbody { padding-left: 5px; }
.p-modify .smallcol:nth-child(2) { width: 36px; }
.p-modify .smallcol:nth-child(3) { width: 52px; }

.b-text { width: 61px; }
.b-dim { width: 84px; margin-right: 10px; }

.b-layer { width: 78px; margin-left: 7px; }
.layercol { margin-left: 6px; width: 259px; padding-top: 5px; }
.dd { display: flex; align-items: center; background: linear-gradient(#5e5e5e, #4b4b4b); border: 1px solid #2e2e2e; color: #eef3f8; font-size: 17.500px; }
.dd-layer { height: 27px; padding-left: 4px; gap: 0; }
.dd-layer .swatch { margin-left: 4px; }
.dd-layer .dd-text { margin-left: 6px; flex: 1; }
.dd-zero { color: #cfe6fb; }
.swatch { width: 17px; height: 18px; background: #fff; border: 1px solid #111; flex: none; }
.ar-dd { margin-left: auto; margin-right: 2px; border-left-width: 5px; border-right-width: 5px; border-top-width: 5px; }
.lrow { height: 31px; display: flex; align-items: center; gap: 8px; padding-left: 3px; }

.b-insert { width: 56px; }
.b-match { width: 88px; margin-left: 3px; }
.propicons { width: 22px; margin-left: 1px; padding-top: 9px; display: flex; flex-direction: column; gap: 9px; }
.propdds { width: 171px; margin-left: 2px; padding-top: 4px; display: flex; flex-direction: column; gap: 3px; }
.dd-c { height: 31px; padding-left: 14px; }
.dd-l { height: 27px; }
.swatch-l { width: 20px; height: 24px; border-color: #aaa; }
.dd-c .dd-text { margin-left: 12px; }
.lnline { width: 70px; margin-left: 10px; border-top: 1.500px solid #ddd; flex: none; }
.lnline-w { width: 77px; margin-left: 4px; }
.dd-clip { overflow: hidden; width: 58px; white-space: nowrap; line-height: 30px; height: 25px; }

.b-group { width: 62px; }
.col-group .sm { width: 28px; padding-left: 3px; }
.sm-active { background: #3f6aa6; border: 1px solid #7d9bc6; height: 27px; margin-top: 1px; padding-left: 2px !important; }

.b-measure { width: 99px; }
.b-paste { width: 74px; }
.p-clip .smallcol { margin-left: 1px; }
.b-base { width: 80px; }

/* document tabs */
.doctabs { height: 34px; flex: none; display: flex; align-items: flex-end; padding-left: 25px; background: #3a3a3a; border-top: 1px solid #9a9a9a; font-size: 18px; }
.dt { position: relative; height: 27px; line-height: 28px; display: block; border-radius: 14px 18px 0 0; background: linear-gradient(#555, #474747); color: #a8a8a8; white-space: nowrap; }
.dt-start { width: 155px; padding-left: 14px; }
.dt-porm { width: 233px; padding-left: 13px; }
.dt-on { width: 152px; margin-left: 2px; padding-left: 11px; color: #f0f0f0; background: linear-gradient(#656565, #555); }
.x { position: absolute; right: 16px; top: 0; font-size: 12px; font-weight: 700; color: #888; }
.dt-on .x { right: 16px; }
.dt-plus { width: 28px; height: 26px; margin-left: 8px; border-radius: 6px 12px 0 10px; background: #4a4a4a; color: #d5d5d5; font-size: 19px; line-height: 24px; text-align: center; font-weight: 700; }
.docstrip { height: 5px; flex: none; background: #555; }

/* workspace */
.workspace { height: 743px; flex: none; display: flex; background: #3a3a3a; }
.palette { position: relative; width: 33px; flex: none; background: linear-gradient(90deg, #7a7a7a 0, #666 4px, #5f5f5f 27px, #333 28px, #333 33px); margin-top: 8px; display: flex; align-items: center; justify-content: flex-start; }
.palette-grip { position: absolute; left: 0; top: 0; width: 28px; height: 10px; background: #8a8a8a; }
.palette-label { writing-mode: vertical-rl; transform: rotate(180deg); margin-left: 7px; margin-top: -10px; font-size: 17.500px; color: #b9b9b9; white-space: nowrap; }
.viewport { position: relative; flex: 1; background: #212830; overflow: hidden; }
.drawing { position: absolute; left: 0; top: 0; }
.crisp { shape-rendering: crispEdges; }
.helix { fill: none; stroke: #f2f2f2; stroke-width: 1; }
.vp-label { position: absolute; left: 3px; top: 6px; font-size: 15.500px; color: #dcdcdc; white-space: nowrap; }
.vp-controls { position: absolute; right: 10px; top: 9px; display: flex; gap: 11px; }
.viewcube { position: absolute; right: 0; top: 43px; }
.vc-top { font: bold 10px "Liberation Sans", sans-serif; fill: #5f6469; }
.vc-front { font: bold 9.500px "Liberation Sans", sans-serif; fill: #5f6469; letter-spacing: .3px; }
.vc-right { font: bold 8px "Liberation Sans", sans-serif; fill: #5f6469; }
.vc-dir { font: bold 18px "Liberation Sans", sans-serif; fill: #a9abad; }
.vc-s { font-size: 22px; }
.vc-e { font-size: 20px; }
.vc-wcs { font: 12.500px "Liberation Sans", sans-serif; fill: #5f6270; letter-spacing: .5px; }
.navbar { position: absolute; right: 3px; top: 258px; width: 40px; height: 258px; background: #4d5258; border-radius: 4px; }

/* command line */
.cmd { position: absolute; left: 0; bottom: 0; width: 1840px; height: 98px; display: flex; border-top: 1px solid #777; }
.cmd-side { width: 29px; flex: none; background: #555; display: flex; flex-direction: column; align-items: center; padding-top: 3px; }
.cmd-grip { width: 22px; height: 8px; border-top: 2px dotted #aaa; border-bottom: 2px dotted #aaa; margin-bottom: 9px; }
.wrench { margin-top: 8px; }
.cmd-main { flex: 1; display: flex; flex-direction: column; font-family: "Liberation Mono", monospace; font-size: 15px; color: #0e0e0e; }
.cmd-hist { flex: 1; background: #c8c8c8; padding: 0 0 0 3px; display: flex; flex-direction: column; justify-content: flex-end; line-height: 19.500px; white-space: pre; }
.cmd-input { position: relative; height: 27px; flex: none; background: #fff; border-top: 1px solid #8a8a8a; display: flex; align-items: center; padding-left: 8px; }
.ar-cmd { margin-left: 2px; border-left-width: 3.500px; border-right-width: 3.500px; border-top-color: #888; }
.cmd-line { margin-left: 7px; white-space: pre; }
.chip { background: #d2d2d2; border-radius: 4px; padding: 3px 2px; margin: 0 -3px 0 -2px; }
.chip u { text-decoration: none; color: #1010e0; }
.ar-up { position: absolute; right: 5px; top: 10px; border-left: 4px solid transparent; border-right: 4px solid transparent; border-bottom: 5px solid #333; }

/* bottom bar */
.bottombar { height: 60px; flex: none; display: flex; justify-content: space-between; background: #3a3a3a; }
.layouttabs { display: flex; height: 25px; padding-left: 15px; gap: 8px; font-size: 18px; }
.lt { width: 84px; line-height: 29px; text-align: center; border-radius: 0 0 6px 10px; background: #4a4a4a; color: #aeaeae; overflow: hidden; }
.lt-on { width: 79px; font-weight: 700; font-size: 18.500px; color: #f4f4f4; background: #565656; }
.lt-plus { width: 28px; margin-left: 2px; border-radius: 0 0 6px 10px; background: #4a4a4a; color: #ccc; text-align: center; font-weight: 700; font-size: 18px; line-height: 22px; }
.status { width: 772px; height: 33px; margin-top: 27px; display: flex; gap: 2px; color: #eee; }
.seg { height: 33px; flex: none; display: flex; align-items: center; justify-content: space-evenly; background: #454545; border: 1px solid #6a6a6a; }
.s-model { width: 60px; font-size: 15px; }
.s-grid { width: 80px; }
.s-a { width: 159px; }
.s-b { width: 79px; }
.s-c { width: 132px; }
.s-d { width: 50px; }
.s-e { width: 30px; }
.s-f { width: 31px; }
.s-g { width: 40px; }
.s-h { flex: 1; }
.ar-st { border-left-width: 4.500px; border-right-width: 4.500px; border-top-width: 6px; }
.scale { font-size: 15px; }

/* taskbar */
.taskbar { position: relative; height: 60px; flex: none; display: flex; align-items: center; background: linear-gradient(90deg, #262626 0, #262626 45%, #2a2626 62%, #3c2529 85%, #33272a 100%); }
.weather { display: flex; align-items: center; gap: 9px; padding-left: 28px; padding-top: 4px; width: 685px; flex: none; }
.w-text { display: flex; flex-direction: column; font-size: 14.500px; line-height: 20px; color: #eee; }
.w-sub { color: #c9c9c9; font-size: 15.700px; }
.tb-apps { display: flex; }
.tb { position: relative; width: 55px; height: 50px; display: flex; align-items: center; justify-content: center; }
.tb-dot::after { content: ""; position: absolute; left: 24px; bottom: 1px; width: 8px; height: 4px; border-radius: 2px; background: #9a9a9a; }
.tb-acad { background: linear-gradient(#313131, #313131) 3px 0 / 46px 100% no-repeat, linear-gradient(#2a2a2a, #2a2a2a) 3px 2px / 51px 46px no-repeat; }
.tb-acad::after { content: ""; position: absolute; left: 18px; bottom: 1px; width: 20px; height: 4px; border-radius: 2px; background: #f04bc8; }
.tile { width: 30px; height: 31px; display: block; position: relative; text-align: center; font-family: "Liberation Sans", sans-serif; font-weight: 700; line-height: 31px; font-size: 30px; overflow: hidden; }
.tile-a { background: linear-gradient(135deg, #fff, #f6dcd6); color: #b3222c; }
.tile-3 { background: linear-gradient(135deg, #bfe6e2, #e4f3f0); color: #14868f; }
.tile-max { position: absolute; right: 2px; bottom: 0; font-size: 6px; line-height: 7px; font-weight: 700; color: #14868f; }
.tray { position: absolute; right: 0; top: 0; height: 60px; padding-top: 2px; display: flex; align-items: center; gap: 12px; padding-right: 24px; }
.clock { display: flex; flex-direction: column; align-items: flex-end; font-size: 14.500px; line-height: 20px; color: #f0f0f0; margin-left: 6px; }
.badge { width: 20px; height: 20px; margin-left: -3px; border-radius: 50%; background: #f03ec6; color: #111; font-size: 13px; line-height: 20px; text-align: center; }
```
